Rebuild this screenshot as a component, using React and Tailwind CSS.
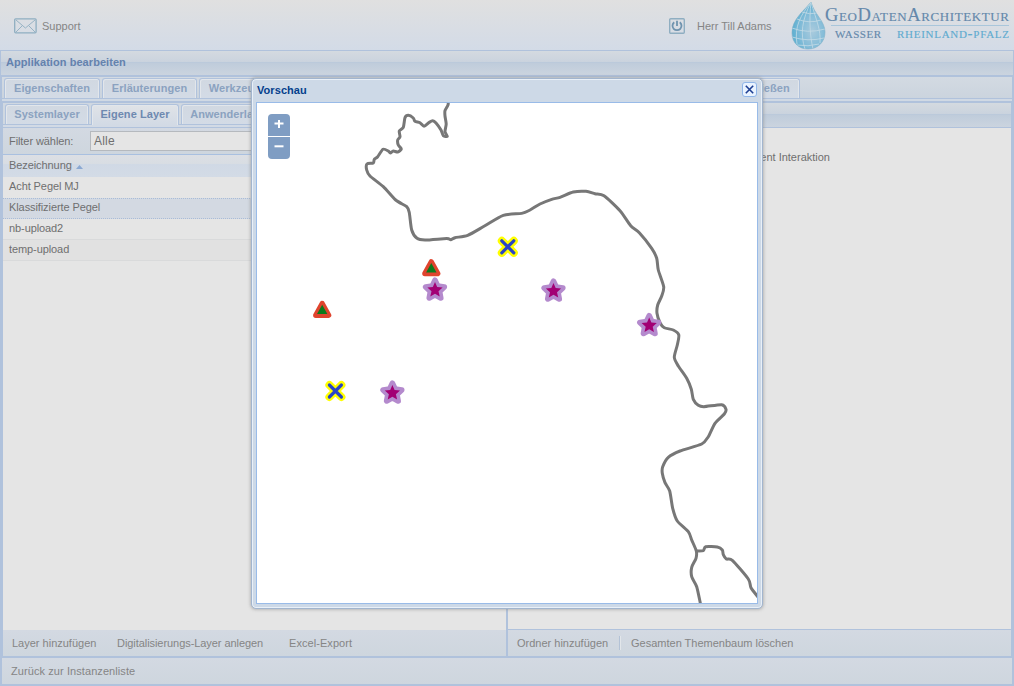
import React from "react";

const border = [
  [448.3,102],[448,105],[445,110.7],[445,116],[446.2,124],[445,131.7],[447.3,136.3],[443.3,135.7],[441,130],[436,123],[432.7,120.7],[429,122.5],[424,126.3],[420,122.7],[415,121.3],[413.3,118],[408.3,115.3],[405,117.7],[403.3,127.3],[399.3,131],[400,136.7],[397.7,140],[398.3,145],[401.3,149],[397.7,152],[393.3,151],[390.3,153],[388.3,151],[383,149.3],[377.7,156.7],[374.3,159.3],[373.3,163],[367,164],[366.7,170],[370,176],[383.3,186.7],[395.7,200],[406.7,206.7],[409.3,212.7],[411.7,230],[416.7,238],[425,240],[446.7,238.5],[450.7,239.7],[455,237.7],[467.7,235.3],[484,226.3],[503.3,215.3],[521.7,213.4],[530,210],[540,204],[551.7,199.3],[560,197.3],[573.3,192],[586,191.3],[595,193.7],[604,195.7],[620,210.7],[630.7,225.7],[639.3,232.7],[651.7,248.3],[656.7,258.3],[658.3,270],[663.7,286.7],[661.7,296],[657.7,305],[657,313.3],[660,322.7],[664.3,327.7],[673.3,330],[678.8,335],[677.3,345],[674.3,357.3],[678.3,366],[686.7,378.3],[691.3,389.3],[693.3,399.3],[698.3,405.3],[704,406.7],[721.7,404.7],[726,409.3],[724.3,414],[715,423.3],[708.3,436.7],[701.7,444],[680,451],[668.3,457.3],[662.7,466.7],[662.3,473.3],[665,482.7],[669.7,491],[672.7,508.3],[677.3,521],[688.3,531.7],[691.7,540],[696.3,551],[696,558.3],[691.7,567.3],[691.7,576.7],[696.7,586.7],[700.5,604],
];
const branch = [
  [696.3,551],[703.3,550.7],[705.7,546.7],[717.3,547],[722.3,550],[723.3,554.7],[726.3,559],[732.3,560.3],[748.3,579],[751,587.7],[758,597],
];

// Catmull-Rom spline through the given points
function smooth(p) {
  let d = `M${p[0]}`;
  for (let i = 0; i < p.length - 1; i++) {
    const a = p[i - 1] || p[i], b = p[i], c = p[i + 1], e = p[i + 2] || c;
    d += `C${b[0] + (c[0] - a[0]) / 8},${b[1] + (c[1] - a[1]) / 8} ${c[0] - (e[0] - b[0]) / 8},${c[1] - (e[1] - b[1]) / 8} ${c}`;
  }
  return d;
}

function starPoints(r, inner) {
  return Array.from({ length: 10 }, (_, i) => {
    const a = (i * Math.PI) / 5, q = i % 2 ? inner : r;
    return `${q * Math.sin(a)},${-q * Math.cos(a)}`;
  }).join(" ");
}

const Star = ({ x, y }) => (
  <g transform={`translate(${x} ${y})`}>
    <polygon points={starPoints(9.8, 4.8)} fill="#b48acd" stroke="#b48acd" strokeWidth="5.6" strokeLinejoin="round" />
    <polygon points={starPoints(8, 3.7)} fill="#a20074" />
  </g>
);
const Cross = ({ x, y }) => (
  <g transform={`translate(${x} ${y})`} strokeLinecap="round">
    <path d="M-6-6L6 6M6-6L-6 6" stroke="#ffff00" strokeWidth="8" />
    <path d="M-6-6L6 6M6-6L-6 6" stroke="#2a46c6" strokeWidth="3.2" />
  </g>
);
const Triangle = ({ x, y }) => (
  <g transform={`translate(${x} ${y})`}>
    <path d="M0-6.1L6.5 5.8H-6.5Z" fill="#e0442e" stroke="#e0442e" strokeWidth="5.2" strokeLinejoin="round" />
    <path d="M0-4.8L5.2 4.6H-5.2Z" fill="#0c7a1c" />
  </g>
);

function Tab({ children, active, className }) {
  return (
    <div
      className={`flex shrink-0 justify-center overflow-hidden rounded-t-[3px] border border-b-0 border-[#b0c2dc] font-bold tracking-[0.06px] whitespace-nowrap shadow-[inset_1px_1px_0_#e2e6eb,inset_-1px_0_0_#e2e6eb] ${
        active
          ? "h-[21px] bg-linear-to-b from-[#e0e3e7] to-[#d2dae5] text-[#6e89b0]"
          : "h-5 bg-linear-to-b from-[#d1d8e1] to-[#d3dbe6] text-[#8ba2c0]"
      } ${className}`}
    >
      <span className="leading-[19px]">{children}</span>
    </div>
  );
}

const bar = "bg-linear-to-b from-[#d3d9e2] to-[#ced6de]";
const panelHead = "bg-[linear-gradient(to_bottom,#d4dae0_0,#cad3de_11px,#b7c7db_11px,#bfccdb_12px,#cbd4df_100%)]";

function Logo() {
  return (
    <svg className="absolute top-0 left-[788px]" width="226" height="50" viewBox="788 0 226 50">
      <defs>
        <radialGradient id="drop" cx="0.62" cy="0.62" r="0.6">
          <stop offset="0" stopColor="#a9cadd" />
          <stop offset="0.6" stopColor="#83bcd8" />
          <stop offset="1" stopColor="#5fb0d1" />
        </radialGradient>
        <clipPath id="dropClip"><path d="M811 2C804 11 792 19 792 33C792 43 799 49 808 49C818 49 825 42 825 32C825 21 814 14 811 2Z" /></clipPath>
      </defs>
      <path d="M811 2C804 11 792 19 792 33C792 43 799 49 808 49C818 49 825 42 825 32C825 21 814 14 811 2Z" fill="url(#drop)" stroke="#7fb0c8" strokeWidth="0.6" />
      <g clipPath="url(#dropClip)" fill="none" stroke="#c4dae6" strokeWidth="0.8">
        <path d="M811 2C801 15 794 26 797 44M811 2C802 20 800 34 805 49M811 2C809 20 810 36 813 49M811 2C816 20 821 29 820 43" />
        <path d="M802 12Q810 15 817 13M797 19Q809 24 821 20M792 28Q807 34 825 29M792 37Q808 42 824 38M797 45Q808 47 819 44" />
      </g>
      <g fontFamily="'Liberation Serif', serif" fontVariant="small-caps">
        <text x="825" y="20.5" fontSize="18.5" fill="#6488ab" stroke="#6488ab" strokeWidth="0.15" textLength="184">GeoDatenArchitektur</text>
        <text x="835" y="38" fontSize="15" fill="#6488ab" stroke="#6488ab" strokeWidth="0.15" textLength="46">wasser</text>
        <text x="897" y="38" fontSize="15" fill="#60abd0" stroke="#60abd0" strokeWidth="0.15" textLength="112">rheinland-pfalz</text>
      </g>
      <path d="M831 25.5H1009" stroke="#a9c6db" />
    </svg>
  );
}

function Header() {
  return (
    <header className="relative flex h-[50px] shrink-0 items-center bg-linear-to-b from-[#e0e0e0] to-[#d3dbe7] pt-[2px] text-[#858585]">
      <svg className="ml-[14px]" width="23" height="16" viewBox="0 0 23 16" fill="none" stroke="#8faec1">
        <rect x="0.7" y="0.8" width="21.4" height="14" rx="1" strokeWidth="1.3" />
        <path d="M2 2L11.4 10L21 2M2 14L8 8M21 14L15 8" strokeWidth="0.9" />
      </svg>
      <span className="ml-[5px] w-[38px]">Support</span>
      <svg className="ml-[589px]" width="16" height="16" viewBox="0 0 16 16" fill="none" stroke="#8faec1">
        <rect x="0.7" y="0.7" width="14.6" height="14.6" rx="1" strokeWidth="1.4" />
        <path d="M5.2 4.2A4.5 4.5 0 1 0 10.8 4.2M8 2.8V8" stroke="#6f93ae" strokeWidth="1.8" />
      </svg>
      <span className="ml-3">Herr Till Adams</span>
      <Logo />
    </header>
  );
}

function LayerPanel() {
  return (
    <section className="flex w-[503px] flex-col">
      <div className="flex h-[22px] gap-[2px] border-b border-[#b0c2dc] bg-[#d0d8e1] pt-px pl-[2px]">
        <Tab className="w-[84px]">Systemlayer</Tab>
        <Tab active className="w-[88px]">Eigene Layer</Tab>
        <Tab className="w-[98px]">Anwenderlayer</Tab>
      </div>
      <div className="h-[3px] border-b border-[#b0c2dc] bg-[#d2dae5]" />
      <div className={`flex h-[27px] items-center border-b border-[#a9c0e0] pl-[6px] ${bar}`}>
        <span className="w-[81px] tracking-[-0.08px]">Filter wählen:</span>
        <div className="h-5 w-[250px] border border-[#b5b9be] bg-[#e5e5e5] pl-[3px] text-[12px] leading-[18px] tracking-[0.2px]">Alle</div>
      </div>
      <div className="flex h-[22px] items-center gap-1 bg-[linear-gradient(#dcdfe4_0,#d8dde3_9px,#d0d9e5_9px,#d3dbe6_100%)] pb-[2px] pl-[6px]">
        <span className="tracking-[-0.08px]">Bezeichnung</span>
        <svg className="mt-[4px]" width="7" height="4" viewBox="0 0 7 4"><path d="M3.5 0L7 4H0Z" fill="#8aa8d2" /></svg>
      </div>
      <div className="flex grow flex-col bg-[#e5e5e5] tracking-[-0.09px]">
        <div className="h-[21px] pl-[6px] leading-[19px]">Acht Pegel MJ</div>
        <div className="h-[21px] border-y border-dotted border-[#a9bcd8] bg-[#d3d9e2] pl-[6px] leading-[17px]">Klassifizierte Pegel</div>
        <div className="h-[21px] border-b border-[#d9dadb] pl-[6px] leading-[19px]">nb-upload2</div>
        <div className="h-[21px] border-b border-[#d9dadb] bg-[#e1e1e1] pl-[6px] leading-[19px]">temp-upload</div>
      </div>
      <div className={`flex h-[26px] items-center pl-[9px] text-[#858585] ${bar}`}>
        <span className="w-[105px]">Layer hinzufügen</span>
        <span className="w-[172px] tracking-[-0.06px]">Digitalisierungs-Layer anlegen</span>
        <span className="tracking-[0.06px]">Excel-Export</span>
      </div>
    </section>
  );
}

function ThemePanel() {
  return (
    <section className="flex min-w-0 grow flex-col">
      <div className={`h-[25px] border-b border-[#b0c2dc] ${panelHead}`} />
      <div className="grow bg-[#e5e5e5] pt-[22px]">
        <div className="w-[322px] text-right leading-[14px]">Element Interaktion</div>
      </div>
      <div className={`flex h-[27px] items-center border-t border-[#b0c2dc] pl-[9px] text-[#858585] ${bar}`}>
        <span className="w-[102px]">Ordner hinzufügen</span>
        <span className="mr-[10px] h-[14px] w-[2px] border-r border-l border-r-[#e2e6ea] border-l-[#b3c2d6]" />
        <span>Gesamten Themenbaum löschen</span>
      </div>
    </section>
  );
}

function PreviewWindow() {
  return (
    <div className="absolute top-[78px] left-[251px] flex h-[531px] w-[512px] flex-col rounded-[5px] border border-[#a2b5ce] bg-[#cdd9e7] px-1 pb-1 shadow-[inset_0_0_0_1px_#e9f0f8,0_0_3px_1px_#88888877]">
      <div className="flex h-[23px] shrink-0 items-center justify-between pr-[1px] pb-[2px] pl-[1px]">
        <span className="font-bold tracking-[0.06px] text-[#04408c]">Vorschau</span>
        <button className="flex h-[15px] w-[15px] items-center justify-center rounded-[3px] border border-[#90b6e8] bg-[#e9f3ff]">
          <svg width="9" height="9" viewBox="0 0 9 9"><path d="M0.8 0.8L8.2 8.2M8.2 0.8L0.8 8.2" stroke="#1e3f93" strokeWidth="1.6" /></svg>
        </button>
      </div>
      <div className="relative h-[502px] w-[502px] border border-[#99bbe8] bg-white">
        <svg className="block" width="500" height="500" viewBox="257 103 500 500">
          <g fill="none" stroke="#777" strokeWidth="3" strokeLinejoin="round">
            <path d={smooth(border)} />
            <path d={smooth(branch)} />
          </g>
          <Star x={435} y={290} />
          <Star x={553.5} y={291} />
          <Star x={649.2} y={325.5} />
          <Star x={392.4} y={393} />
          <Triangle x={431.3} y={267.8} />
          <Triangle x={322.2} y={309.5} />
          <Cross x={507.8} y={246.8} />
          <Cross x={335.4} y={391} />
        </svg>
        <div className="absolute top-[11px] left-[11px] flex w-[22px] flex-col gap-px">
          <button className="flex h-[22px] items-center justify-center rounded-t-[4px] bg-[#7f9dc3]">
            <svg width="10" height="10" viewBox="0 0 10 10"><path d="M5 -1V8M0.5 3.5H9.5" stroke="#fff" strokeWidth="2" overflow="visible" /></svg>
          </button>
          <button className="flex h-[22px] items-center justify-center rounded-b-[4px] bg-[#7f9dc3]">
            <svg width="10" height="10" viewBox="0 0 10 10"><path d="M0.5 3.3H9.5" stroke="#fff" strokeWidth="2" /></svg>
          </button>
        </div>
      </div>
    </div>
  );
}

export default function App() {
  return (
    <div className="relative flex h-[686px] w-[1014px] flex-col overflow-hidden bg-[#b0c2dc] font-['Liberation_Sans',Arial,sans-serif] text-[11px] leading-[14px] text-[#6f6f6f]">
      <Header />
      <div className={`mx-px mt-px flex h-6 shrink-0 items-center pb-[2px] pl-[5px] font-bold tracking-[0.06px] text-[#6482ae] ${panelHead}`}>Applikation bearbeiten</div>
      <div className="mx-[2px] mt-[2px] flex h-[22px] shrink-0 gap-[2px] border-b border-[#b0c2dc] bg-linear-to-b from-[#d3dae2] to-[#cbd4de] pt-px pl-[2px]">
        <Tab className="w-[96px]">Eigenschaften</Tab>
        <Tab className="w-[95px]">Erläuterungen</Tab>
        <Tab className="w-[78px]">Werkzeuge</Tab>
        <Tab className="w-[446px]">Layer</Tab>
        <Tab className="w-[73px]">Schließen</Tab>
      </div>
      <div className="mx-[2px] h-[2px] shrink-0 bg-[#d0d9e4]" />
      <main className="mr-[3px] ml-[3px] mt-[2px] flex h-[553px] shrink-0 gap-[2px]">
        <LayerPanel />
        <ThemePanel />
      </main>
      <footer className={`mx-[2px] mt-[2px] flex h-[26px] shrink-0 items-center pl-[9px] tracking-[0.08px] text-[#858585] ${bar}`}>Zurück zur Instanzenliste</footer>
      <PreviewWindow />
    </div>
  );
}
